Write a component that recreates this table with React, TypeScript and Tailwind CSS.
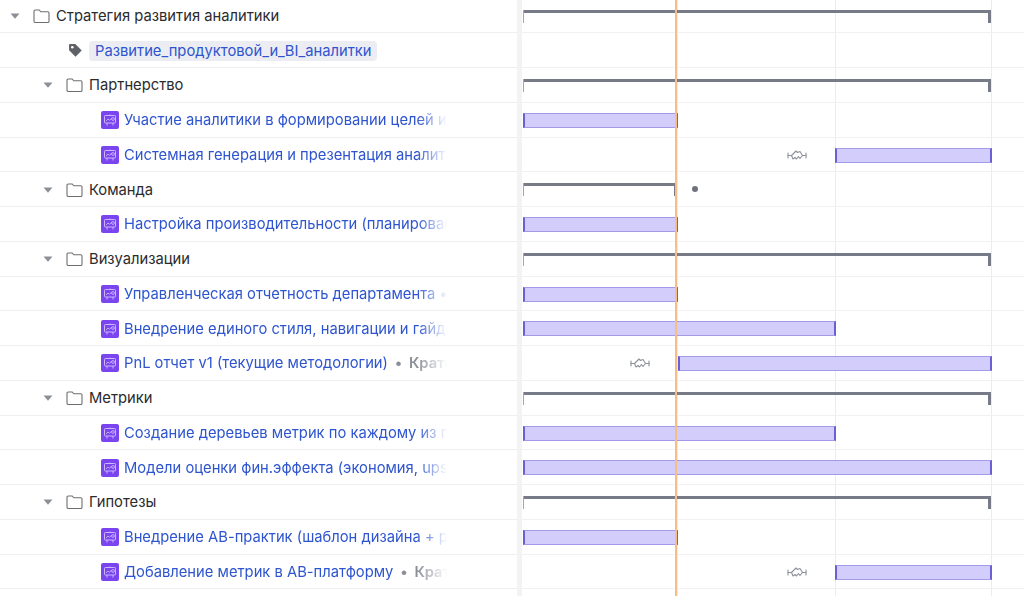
import React from 'react';

type Bar =
  | { kind: 'summary'; from: number; to: number; dot?: number }
  | { kind: 'task'; from: number; to: number; link?: number };

type Row = {
  type: 'group' | 'tag' | 'task';
  level: number;
  text: string;
  extra?: string;
  bar?: Bar;
};

const rows: Row[] = [
  { type: 'group', level: 0, text: 'Стратегия развития аналитики', bar: { kind: 'summary', from: 1, to: 469 } },
  { type: 'tag', level: 1, text: 'Развитие_продуктовой_и_BI_аналитки' },
  { type: 'group', level: 1, text: 'Партнерство', bar: { kind: 'summary', from: 1, to: 469 } },
  { type: 'task', level: 2, text: 'Участие аналитики в формировании целей и приоритетов', bar: { kind: 'task', from: 1, to: 155 } },
  { type: 'task', level: 2, text: 'Системная генерация и презентация аналитических инсайтов', bar: { kind: 'task', from: 313, to: 469, link: 275 } },
  { type: 'group', level: 1, text: 'Команда', bar: { kind: 'summary', from: 1, to: 155, dot: 170 } },
  { type: 'task', level: 2, text: 'Настройка производительности (планирование)', bar: { kind: 'task', from: 1, to: 155 } },
  { type: 'group', level: 1, text: 'Визуализации', bar: { kind: 'summary', from: 1, to: 469 } },
  { type: 'task', level: 2, text: 'Управленческая отчетность департамента • отчеты', bar: { kind: 'task', from: 1, to: 155 } },
  { type: 'task', level: 2, text: 'Внедрение единого стиля, навигации и гайдов', bar: { kind: 'task', from: 1, to: 313 } },
  { type: 'task', level: 2, text: 'PnL отчет v1 (текущие методологии)', extra: 'Краткосрочные', bar: { kind: 'task', from: 156, to: 469, link: 118 } },
  { type: 'group', level: 1, text: 'Метрики', bar: { kind: 'summary', from: 1, to: 469 } },
  { type: 'task', level: 2, text: 'Создание деревьев метрик по каждому из продуктов', bar: { kind: 'task', from: 1, to: 313 } },
  { type: 'task', level: 2, text: 'Модели оценки фин.эффекта (экономия, upsell)', bar: { kind: 'task', from: 1, to: 469 } },
  { type: 'group', level: 1, text: 'Гипотезы', bar: { kind: 'summary', from: 1, to: 469 } },
  { type: 'task', level: 2, text: 'Внедрение АВ-практик (шаблон дизайна + расчет)', bar: { kind: 'task', from: 1, to: 155 } },
  { type: 'task', level: 2, text: 'Добавление метрик в АВ-платформу', extra: 'Краткосрочные', bar: { kind: 'task', from: 313, to: 469, link: 275 } },
  { type: 'group', level: 1, text: '' },
];

function Caret() {
  return (
    <svg width="10" height="6" viewBox="0 0 10 6" className="shrink-0">
      <path d="M0.5 0.5h9L5 5.8z" fill="#8b8f98" />
    </svg>
  );
}

function Folder() {
  return (
    <svg width="17" height="14" viewBox="0 0 17 14" className="shrink-0">
      <path
        d="M1 2.2c0-.7.5-1.2 1.2-1.2h4l1.6 1.8h7c.7 0 1.2.5 1.2 1.2v8.3c0 .7-.5 1.2-1.2 1.2H2.2c-.7 0-1.2-.5-1.2-1.2z"
        fill="none"
        stroke="#6e6e72"
        strokeWidth="1.1"
      />
    </svg>
  );
}

function TagIcon() {
  return (
    <svg width="15" height="15" viewBox="0 0 14 14" className="shrink-0">
      <path d="M1 1.8C1 1.4 1.4 1 1.8 1h5l6 6-5.8 5.8-6-6z" fill="#5f6167" />
      <circle cx="4" cy="4" r="1.2" fill="#fff" />
    </svg>
  );
}

function TaskIcon() {
  return (
    <svg width="18" height="18" viewBox="0 0 18 18" className="shrink-0">
      <rect x="0" y="0" width="18" height="18" rx="2" fill="#7a45ee" />
      <rect x="3.5" y="4.5" width="11" height="7.5" rx="0.8" fill="none" stroke="#c9b6ff" strokeWidth="1" />
      <path d="M5 10l2-2 1.5 1.2L11 7" fill="none" stroke="#c9b6ff" strokeWidth="0.9" />
      <circle cx="12" cy="8" r="1.4" fill="none" stroke="#c9b6ff" strokeWidth="0.9" />
      <path d="M9 3.5v1M6 12v2.5M12 12v2.5" stroke="#c9b6ff" strokeWidth="1" />
    </svg>
  );
}

function LinkIcon() {
  return (
    <svg width="20" height="12" viewBox="0 0 20 12">
      <g fill="none" stroke="#8d919b" strokeWidth="1.1" strokeLinejoin="round" strokeLinecap="round">
        <path d="M1 4v5M19 4v5" />
        <path d="M1 6.5h3.5M15.5 6.5H19" />
        <path d="M4.5 6.5L9 2l1.5 1.5L13 2.5l2.5 4-2.5 3-1.5-2-2 2.5-1.5-1.5-2 1.5z" />
      </g>
    </svg>
  );
}

function NameCell({ row }: { row: Row }) {
  const pad = row.type === 'task' ? 'pl-[101px]' : row.type === 'tag' ? 'pl-[68px]' : row.level === 0 ? 'pl-[10px]' : 'pl-[43px]';
  return (
    <div className={`flex items-center h-full w-[449px] pt-[1px] ${pad} overflow-hidden`}>
      {row.type === 'group' && row.text && (
        <>
          <Caret />
          <span className="ml-[13px]">
            <Folder />
          </span>
          <span className="ml-[6px] text-[#2b2b2e] whitespace-nowrap">{row.text}</span>
        </>
      )}
      {row.type === 'tag' && (
        <>
          <TagIcon />
          <span className="ml-[6px] px-[6px] h-[20px] flex items-center rounded bg-[#ecedf2] text-[#2e55cf] whitespace-nowrap">
            {row.text}
          </span>
        </>
      )}
      {row.type === 'task' && (
        <>
          <TaskIcon />
          <span className="ml-[5px] flex-1 min-w-0 whitespace-nowrap overflow-hidden [mask-image:linear-gradient(to_right,black_calc(100%-32px),transparent_calc(100%-2px))]">
            <span className="text-[#2e55cf]">{row.text}</span>
            {row.extra && (
              <>
                <span className="text-[#8b8f98] font-bold mx-[7px]">•</span>
                <span className="text-[#8b8f98] font-semibold">{row.extra}</span>
              </>
            )}
          </span>
        </>
      )}
    </div>
  );
}

function GanttBar({ bar }: { bar: Bar }) {
  if (bar.kind === 'summary') {
    return (
      <>
        <div className="absolute top-[11px] h-[13px]" style={{ left: bar.from, width: bar.to - bar.from }}>
          <div className="h-[3px] bg-[#777b87]" />
          <div className="absolute left-0 top-0 w-px h-[13px] bg-[#a3a6ae]" />
          <div className="absolute right-0 top-0 w-[3px] h-[13px] bg-[#777b87]" />
        </div>
        {bar.dot !== undefined && (
          <div className="absolute top-[14px] w-[6px] h-[6px] rounded-full bg-[#6f727b]" style={{ left: bar.dot }} />
        )}
      </>
    );
  }
  return (
    <>
      <div
        className="absolute top-[10px] h-[15px] bg-[#d2cdfb] border-y border-y-[#a29ae8] border-x-2 border-x-[#6b5fd5]"
        style={{ left: bar.from, width: bar.to - bar.from + 1 }}
      />
      {bar.link !== undefined && (
        <div className="absolute top-[11px]" style={{ left: bar.link - 10 }}>
          <LinkIcon />
        </div>
      )}
    </>
  );
}

export default function App() {
  return (
    <div className="w-[1024px] h-[596px] overflow-hidden bg-white flex font-['Inter','Noto_Sans',sans-serif] text-[14.75px]">
      {/* Left: tree */}
      <div className="w-[517px] shrink-0 -mt-[1.4px]">
        {rows.map((row, i) => (
          <div key={i} className="h-[34.75px] border-b border-[#efeff1]">
            <NameCell row={row} />
          </div>
        ))}
      </div>

      {/* Splitter */}
      <div className="w-[5px] shrink-0 bg-[#f3f3f4]" />

      {/* Right: timeline */}
      <div className="relative flex-1 -mt-[1.4px]">
        <div className="absolute inset-y-0 left-[155px] w-px bg-[#ececee]" />
        <div className="absolute inset-y-0 left-[313px] w-px bg-[#ececee]" />
        <div className="absolute inset-y-0 left-[469px] w-px bg-[#ececee]" />
        {rows.map((row, i) => (
          <div key={i} className="relative h-[34.75px] border-b border-[#f1f1f3]">
            {row.bar && <GanttBar bar={row.bar} />}
          </div>
        ))}
        <div className="absolute inset-y-0 left-[153px] w-[2px] bg-[#f7bd86] z-10" />
      </div>
    </div>
  );
}
